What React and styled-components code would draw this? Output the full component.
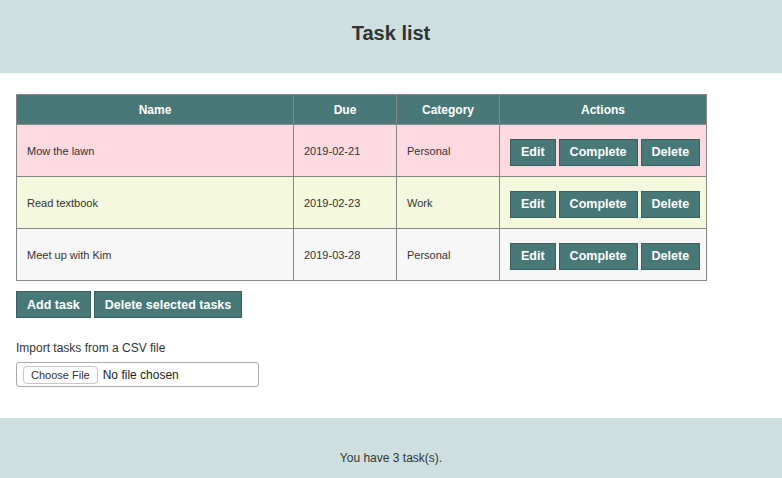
import React from 'react';
import styled, { createGlobalStyle } from 'styled-components';

const tasks = [
	{ name: 'Mow the lawn', due: '2019-02-21', category: 'Personal', tone: 'pink' },
	{ name: 'Read textbook', due: '2019-02-23', category: 'Work', tone: 'lime' },
	{ name: 'Meet up with Kim', due: '2019-03-28', category: 'Personal', tone: 'grey' },
];

const tones = {
	pink: '#fdd9e2',
	lime: '#f4f8dd',
	grey: '#f7f7f7',
};

export default function App() {
	return (
		<>
			<GlobalStyle />
			<Header>
				<h1>Task list</h1>
			</Header>
			<Main>
				<Table>
					<colgroup>
						<col style={{ width: 277 }} />
						<col style={{ width: 103 }} />
						<col style={{ width: 103 }} />
						<col style={{ width: 207 }} />
					</colgroup>
					<thead>
						<tr>
							<th>Name</th>
							<th>Due</th>
							<th>Category</th>
							<th>Actions</th>
						</tr>
					</thead>
					<tbody>
						{tasks.map((t) => (
							<Row key={t.name} $tone={t.tone}>
								<td>{t.name}</td>
								<td>{t.due}</td>
								<td>{t.category}</td>
								<ActionCell>
									<Actions>
										<Button>Edit</Button>
										<Button>Complete</Button>
										<Button>Delete</Button>
									</Actions>
								</ActionCell>
							</Row>
						))}
					</tbody>
				</Table>
				<Toolbar>
					<Button>Add task</Button>
					<Button>Delete selected tasks</Button>
				</Toolbar>
				<Import>
					<label htmlFor='csv'>Import tasks from a CSV file</label>
					<FileBox>
						<input id='csv' type='file' accept='.csv' />
					</FileBox>
				</Import>
			</Main>
			<Footer>You have {tasks.length} task(s).</Footer>
		</>
	);
}

const GlobalStyle = createGlobalStyle`
	body {
		margin: 0;
		font-family: "Liberation Sans", Arial, sans-serif;
		color: #333;
		background: #fff;
	}
`;

const Header = styled.header`
	height: 73px;
	background-color: #cde0df;
	display: flex;
	align-items: center;
	justify-content: center;

	h1 {
		margin: 0;
		font-size: 20px;
		font-weight: bold;
		color: #333;
		padding-bottom: 7px;
	}
`;

const Main = styled.main`
	padding: 21px 16px 31px;
`;

const Table = styled.table`
	width: 690px;
	border-collapse: collapse;
	table-layout: fixed;
	font-size: 11px;

	th,
	td {
		border: 1px solid #888;
	}

	th {
		height: 29px;
		padding: 0;
		background-color: #487877;
		color: #fff;
		font-size: 12px;
		font-weight: bold;
		text-align: center;
	}

	td {
		height: 51px;
		padding: 0 10px;
		text-align: left;
	}
`;

const Row = styled.tr`
	background-color: ${(p) => tones[p.$tone]};
`;

const ActionCell = styled.td`
	&& {
		padding: 0 6px 0 10px;
	}
`;

const Actions = styled.div`
	display: flex;
	gap: 3px;
	padding-top: 3px;
`;

const Button = styled.button`
	height: 27px;
	padding: 0 10px;
	border: 1px solid #3b5f5e;
	background-color: #487877;
	color: #fff;
	font-family: "Liberation Sans", Arial, sans-serif;
	font-size: 12.5px;
	font-weight: bold;
	cursor: pointer;
`;

const Toolbar = styled.div`
	display: flex;
	gap: 3px;
	margin-top: 10px;
`;

const Import = styled.div`
	margin-top: 23px;
	display: flex;
	flex-direction: column;
	gap: 7px;

	label {
		font-size: 12px;
		color: #333;
	}
`;

const FileBox = styled.div`
	width: 235px;
	height: 23px;
	border: 1px solid #aaa;
	border-radius: 3px;
	display: flex;
	align-items: center;
	padding-left: 6px;
	box-sizing: content-box;

	input {
		font-family: "Liberation Sans", Arial, sans-serif;
		font-size: 12px;
		color: #222;
		width: 230px;
	}

	input::file-selector-button {
		font-family: "Liberation Sans", Arial, sans-serif;
		font-size: 11px;
		color: #333;
		background: #fff;
		border: 1px solid #c8c8c8;
		border-radius: 4px;
		padding: 2px 7px;
		margin-right: 5px;
	}
`;

const Footer = styled.footer`
	height: 60px;
	background-color: #cde0df;
	display: flex;
	align-items: flex-end;
	justify-content: center;
	padding-bottom: 13px;
	box-sizing: border-box;
	font-size: 12px;
	color: #333;
`;
